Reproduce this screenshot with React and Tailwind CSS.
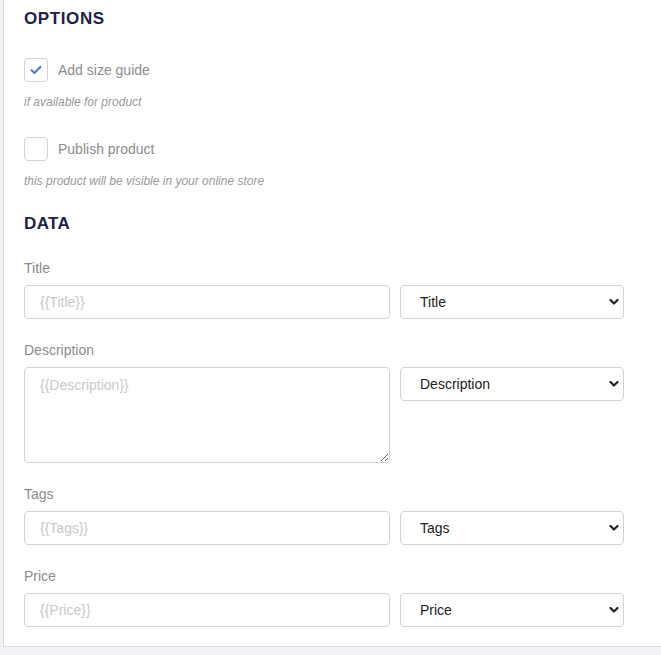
import React from "react";

const Check = ({ checked, label, help, mt }) => (
  <div className={mt}>
    <label className="flex items-center h-[24px]">
      <span className="w-[24px] h-[24px] rounded-[4px] border border-[#d3d3d8] bg-white flex items-center justify-center">
        {checked && (
          <svg width="12" height="10" viewBox="0 0 12 10">
            <path d="M1.5 5.2 L4.5 8 L10.5 1.8" fill="none" stroke="#4a78cf" strokeWidth="2" strokeLinecap="round" strokeLinejoin="round" />
          </svg>
        )}
      </span>
      <span className="ml-[10px] text-[14px] text-[#8c8c8c]">{label}</span>
    </label>
    <div className="mt-[12px] h-[16px] leading-[16px] text-[12px] italic text-[#9a9a9a]">{help}</div>
  </div>
);

const Chevron = () => (
  <svg className="absolute right-[5px] top-1/2 -translate-y-1/2 pointer-events-none" width="10" height="7" viewBox="0 0 10 7">
    <path d="M1.5 1.5 L5 5 L8.5 1.5" fill="none" stroke="#222" strokeWidth="2.2" strokeLinecap="round" strokeLinejoin="round" />
  </svg>
);

const Sel = ({ value }) => (
  <div className="relative w-[224px] h-[34px] shrink-0">
    <select
      defaultValue={value}
      className="appearance-none w-full h-full rounded-[4px] border border-[#d3d3d3] bg-white pl-[19px] pr-[30px] text-[14px] text-[#222] outline-none"
    >
      <option>{value}</option>
    </select>
    <Chevron />
  </div>
);

const Field = ({ label, ph, value, area, mt }) => (
  <div className={mt}>
    <div className="h-[20px] leading-[20px] text-[14px] text-[#8c8c8c]">{label}</div>
    <div className="mt-[7px] flex items-start gap-[10px]">
      {area ? (
        <textarea
          placeholder={ph}
          className="w-[366px] h-[96px] rounded-[4px] border border-[#d3d3d3] bg-white px-[15px] pt-[7px] text-[14px] text-[#222] placeholder:text-[#c9c9c9] outline-none"
        />
      ) : (
        <input
          placeholder={ph}
          className="w-[366px] h-[34px] rounded-[4px] border border-[#d3d3d3] bg-white px-[15px] text-[14px] text-[#222] placeholder:text-[#c9c9c9] outline-none"
        />
      )}
      <Sel value={value} />
    </div>
  </div>
);

export default function App() {
  return (
    <div className="w-[661px] h-[655px] bg-[#f1f2f6] pl-[3px] overflow-hidden" style={{ fontFamily: '"Liberation Sans", Arial, sans-serif' }}>
      <div className="bg-white border-l border-b border-[#dadade] pl-[20px] pt-[7px] pb-[19px] w-[700px]">
        <h2 className="h-[24px] leading-[24px] text-[17px] font-bold tracking-[0.6px] text-[#1e2246]">OPTIONS</h2>
        <Check checked mt="mt-[27px]" label="Add size guide" help="if available for product" />
        <Check mt="mt-[27px]" label="Publish product" help="this product will be visible in your online store" />
        <h2 className="mt-[23px] h-[24px] leading-[24px] text-[17px] font-bold tracking-[0.4px] text-[#1e2246]">DATA</h2>
        <Field mt="mt-[22px]" label="Title" ph="{{Title}}" value="Title" />
        <Field mt="mt-[21px]" label="Description" ph="{{Description}}" value="Description" area />
        <Field mt="mt-[21px]" label="Tags" ph="{{Tags}}" value="Tags" />
        <Field mt="mt-[21px]" label="Price" ph="{{Price}}" value="Price" />
      </div>
    </div>
  );
}
